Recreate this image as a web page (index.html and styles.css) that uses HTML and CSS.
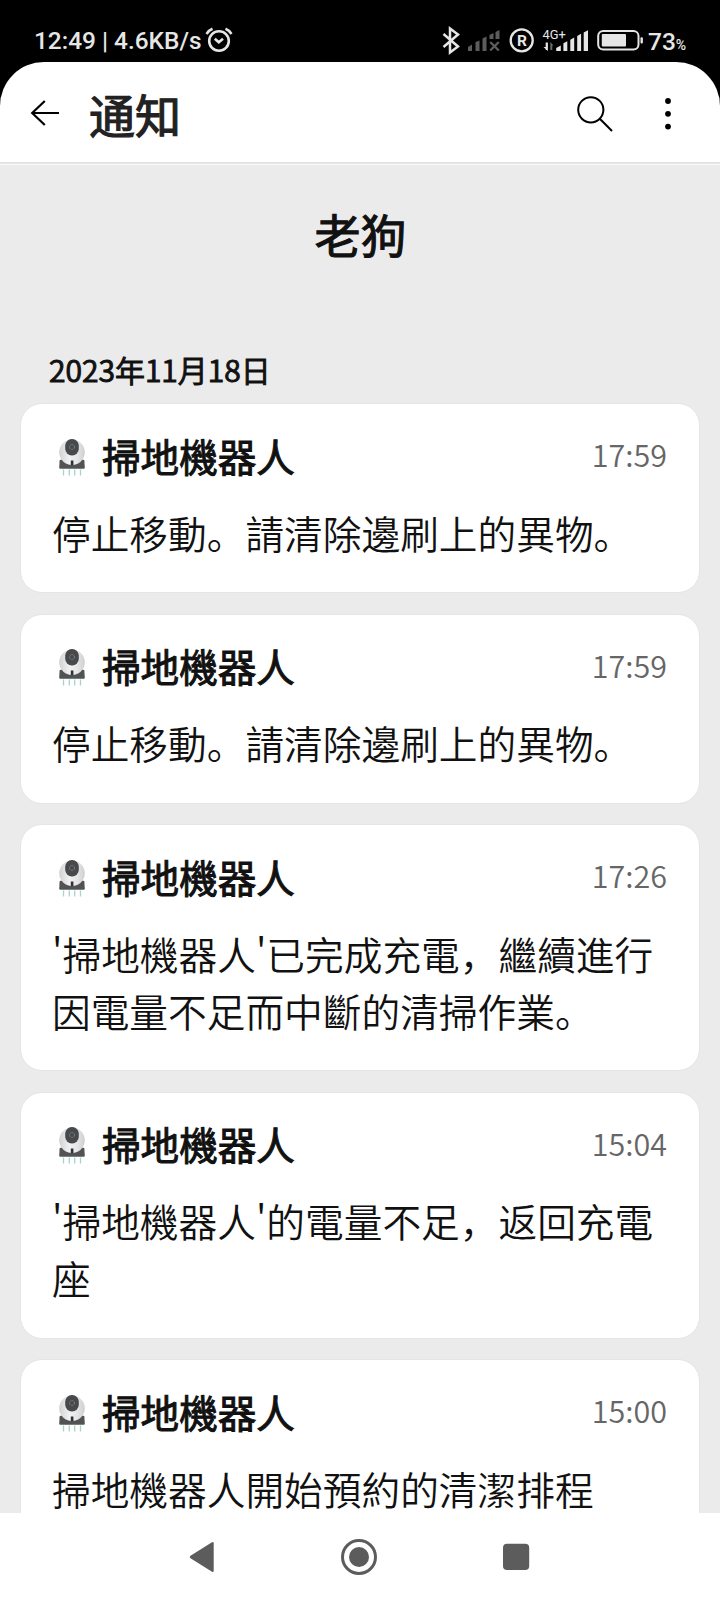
FILE: index.html
```html
<!DOCTYPE html>
<html lang="zh-Hans">
<head>
<meta charset="utf-8">
<title>通知</title>
<link rel="stylesheet" href="styles.css">
</head>
<body>
<svg class="sprite" width="0" height="0">
  <defs>
    <linearGradient id="shell" x1="0" x2="1" y1="0" y2="0">
      <stop offset="0" stop-color="#d2d2d2"/><stop offset=".4" stop-color="#f1f1f1"/><stop offset=".7" stop-color="#e6e6e6"/><stop offset="1" stop-color="#cfcfcf"/>
    </linearGradient>
    <symbol id="robot" viewBox="0 0 28 40">
      <path d="M2.600 21.800h22.800q.9 0 1 1l.4 7q0 1-1 1H2.200q-1 0-1-1l.4-7q.1-1 1-1z" fill="#515355"/>
      <circle cx="14" cy="14.300" r="12.800" fill="url(#shell)"/>
      <path d="M12.800 22.500h2.600v4.600h-2.600z" fill="#303132"/>
      <rect x="7.200" y="1" width="13.600" height="16.400" rx="6.600" fill="#47494b"/>
      <circle cx="14" cy="9" r="2.500" fill="none" stroke="#85898b" stroke-width=".8" stroke-dasharray="2 .7"/>
      <path d="M5.500 31.500v6M11.300 31.500v6M16.700 31.500v6M22.500 31.500v6" stroke="#a3d5cb" stroke-width="1.300"/>
    </symbol>
  </defs>
</svg>
<div class="screen">
  <div class="status">
    <span class="clock">12:49 | 4.6KB/s</span>
    <svg class="alarm" width="28" height="26" viewBox="0 0 28 26" fill="none" stroke="#e6e6e6" stroke-width="2.600">
      <circle cx="14" cy="14" r="9.800"/><path d="M9.800 11.800l4 3.500 4.200-3.500"/><path d="M1.500 7Q4 3.200 7.500 1.800M26.500 7Q24 3.200 20.500 1.800"/>
    </svg>
    <svg class="radios" width="252" height="30" viewBox="0 0 252 30">
      <path d="M3.500 8l14.500 12.500-8 6V2.500l8 6L3.500 21" fill="none" stroke="#e6e6e6" stroke-width="2.500"/>
      <g fill="#5c5c5c"><path d="M28 23v-2l4-2.500V25h-4zM35.500 16l4-1.500V25h-4zM42.500 12.500l4-2V25h-4zM49.500 9l4-2v6h-4zM55.500 6l4-2v9h-4z"/><path d="M50.200 16l8.600 8.500M58.800 16l-8.600 8.500" stroke="#5c5c5c" stroke-width="2.400"/></g>
      <circle cx="81.700" cy="14.400" r="11" fill="none" stroke="#e6e6e6" stroke-width="2.300"/>
      <text x="82" y="20" class="reg">R</text>
      <text x="102.500" y="12.600" class="net">4G+</text>
      <path d="M105.700 16.500v7.500h2.200v-7.500zM103.500 21l4.400 4V21z" fill="#e6e6e6"/><path d="M110.300 24v-8l3.200 3.500h-1.200V24z" fill="#6a6a6a"/>
      <path d="M116.200 25v-3l4.600-2.500V25zM123.400 25v-7.800l3.900-2V25zM130.300 25V13.800l3.900-2.200V25zM137.200 25V10l3.900-2.200V25zM143.700 25V6.500l4.300-2.300V25z" fill="#e6e6e6"/>
      <rect x="158.200" y="5" width="40.300" height="18.500" rx="5" fill="none" stroke="#e6e6e6" stroke-width="2"/>
      <rect x="161.800" y="8" width="24.200" height="12.400" rx="1" fill="#e6e6e6"/>
      <rect x="200.500" y="11.200" width="2.400" height="6.200" rx="1" fill="#e6e6e6"/>
      <text x="208" y="24.300" class="pct">73</text><text x="235.800" y="23.800" class="sign">%</text>
    </svg>
  </div>
  <header class="bar">
    <svg class="back" width="30" height="28" viewBox="0 0 30 28" fill="none" stroke="#000" stroke-width="2.200"><path d="M29 14H2.500M14.800 2L2.200 14l12.600 12"/></svg>
    <h1 class="heading">通知</h1>
    <svg class="search" width="36" height="36" viewBox="0 0 36 36" fill="none" stroke="#000" stroke-width="2"><circle cx="13.800" cy="13.800" r="12.600"/><path d="M22.800 22.800L35 35"/></svg>
    <svg class="more" width="8" height="34" viewBox="0 0 8 34"><circle cx="4" cy="4" r="2.900"/><circle cx="4" cy="16.800" r="2.900"/><circle cx="4" cy="29.600" r="2.900"/></svg>
  </header>
  <main class="feed">
    <h2 class="home">老狗</h2>
    <p class="date">2023年11月18日</p>
    <article class="card">
      <div class="top"><svg class="robot"><use href="#robot"/></svg><h3 class="name">掃地機器人</h3><time class="time">17:59</time></div>
      <p class="text">停止移動。請清除邊刷上的異物。</p>
    </article>
    <article class="card">
      <div class="top"><svg class="robot"><use href="#robot"/></svg><h3 class="name">掃地機器人</h3><time class="time">17:59</time></div>
      <p class="text">停止移動。請清除邊刷上的異物。</p>
    </article>
    <article class="card">
      <div class="top"><svg class="robot"><use href="#robot"/></svg><h3 class="name">掃地機器人</h3><time class="time">17:26</time></div>
      <p class="text">'掃地機器人'已完成充電，繼續進行<br>因電量不足而中斷的清掃作業。</p>
    </article>
    <article class="card">
      <div class="top"><svg class="robot"><use href="#robot"/></svg><h3 class="name">掃地機器人</h3><time class="time">15:04</time></div>
      <p class="text">'掃地機器人'的電量不足，返回充電<br>座</p>
    </article>
    <article class="card">
      <div class="top"><svg class="robot"><use href="#robot"/></svg><h3 class="name">掃地機器人</h3><time class="time">15:00</time></div>
      <p class="text">掃地機器人開始預約的清潔排程</p>
    </article>
  </main>
  <nav class="nav">
    <svg width="28" height="40" viewBox="0 0 28 40"><path d="M2.500 18.800L24 5.300q1.700-.8 1.700 1v27.400q0 1.800-1.700 1L2.500 21.200q-1.700-1.200 0-2.400z" fill="#5c5c5c"/></svg>
    <svg width="40" height="40" viewBox="0 0 40 40"><circle cx="20" cy="20" r="16.500" fill="none" stroke="#5c5c5c" stroke-width="3"/><circle cx="20" cy="20" r="10" fill="#5c5c5c"/></svg>
    <svg width="28" height="40" viewBox="0 0 28 40"><rect x="1" y="6.700" width="26.200" height="26.400" rx="4" fill="#5c5c5c"/></svg>
  </nav>
</div>
</body>
</html>
```
FILE: styles.css
```css
* { box-sizing: border-box; }
body { margin: 0; background: #000; }
h1, h2, h3, p { margin: 0; font-weight: 400; }
.sprite { display: block; height: 0; }
.screen {
  width: 720px; height: 1600px; overflow: hidden;
  display: flex; flex-direction: column; background: #000;
  font-family: "Noto Sans CJK SC", "Noto Sans", sans-serif; color: #111;
}
.status { height: 62px; flex: none; display: flex; align-items: flex-start; padding: 26px 0 0 34px; }
.clock { width: 168px; font: 500 24.400px/30px Roboto, sans-serif; color: #e6e6e6; white-space: nowrap; }
.alarm { margin: 1px 0 0 3px; }
.radios { margin-left: 207px; overflow: visible; }
.reg { font: 700 15.500px Roboto, sans-serif; fill: #e6e6e6; text-anchor: middle; }
.net { font: 400 12.900px Roboto, sans-serif; fill: #e6e6e6; }
.pct { font: 500 24.500px Roboto, sans-serif; fill: #e6e6e6; }
.sign { font: 500 14px Roboto, sans-serif; fill: #e6e6e6; }
.bar {
  height: 102px; flex: none; display: flex; align-items: center;
  padding: 0 48px 0 30px; background: #fff; border-radius: 44px 44px 0 0;
  box-shadow: inset 0 -2px #e5e5e5;
}
.heading { margin-left: 29px; font-size: 46px; line-height: 60px; color: #222; -webkit-text-stroke: 1.200px #222; }
.search { margin: 2px 0 0 auto; }
.more { margin: 1px 0 0 51px; }
.feed { flex: 1; min-height: 0; overflow: hidden; background: #ebebeb; border-top: 1px solid #fafafa; padding: 0 20px; }
.home { margin-top: 38px; padding-left: 1px; font-size: 46px; line-height: 60px; text-align: center; -webkit-text-stroke: 1.100px #111; }
.date { margin-top: 86px; padding-left: 29px; font-size: 30px; font-weight: 350; line-height: 40px; -webkit-text-stroke: 1px #111; }
.card {
  margin-bottom: 20.500px; padding: 23px 32px 31px 31px; background: #fff;
  border: 1px solid #e5e5e5; border-radius: 22px;
}
.date + .card { margin-top: 14px; }
.top { height: 57px; display: flex; align-items: center; }
.robot { width: 28px; height: 40px; margin: 4px 0 0 6px; }
.name { margin: -1px 0 0 16px; font-size: 38.600px; line-height: 57px; -webkit-text-stroke: 1px #111; }
.time { margin: -2px 0 0 auto; font-size: 30.500px; font-weight: 350; line-height: 57px; color: #666; }
.text { margin-top: 19.500px; margin-bottom: .5px; font-size: 38.700px; font-weight: 350; line-height: 57px; white-space: nowrap; }
.nav { height: 87px; flex: none; display: flex; align-items: center; justify-content: center; gap: 123px; padding-right: 2px; background: #fff; }
```
